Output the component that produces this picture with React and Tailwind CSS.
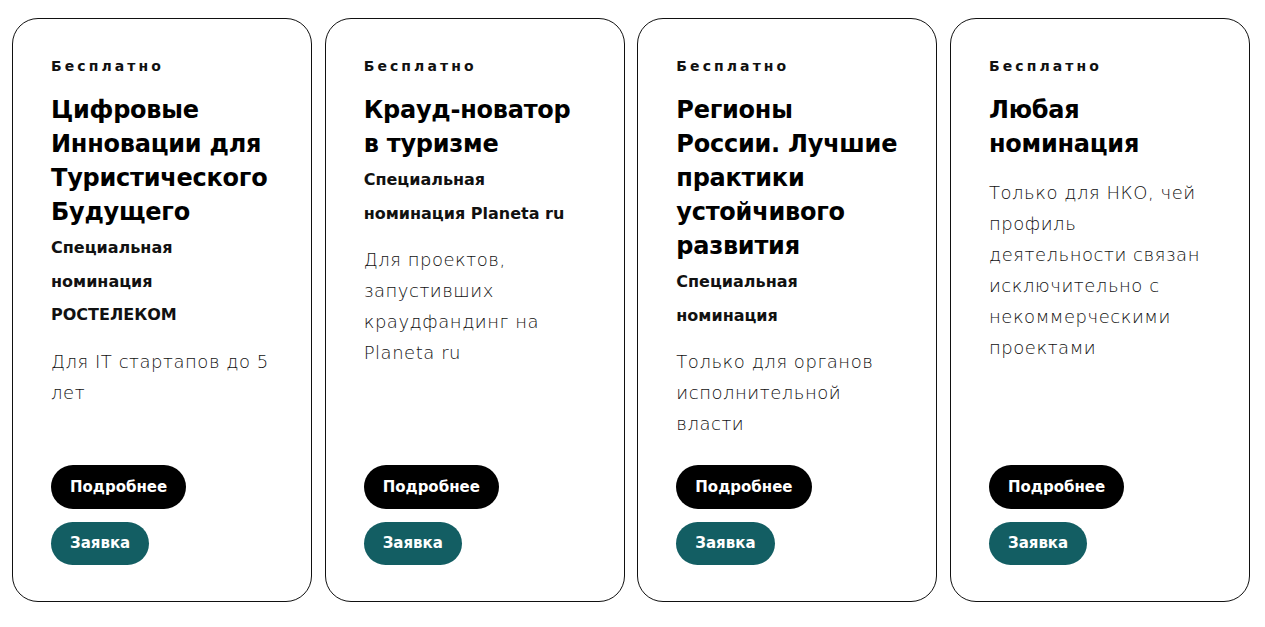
import React from 'react';

const cards = [
  {
    title: ['Цифровые', 'Инновации для', 'Туристического', 'Будущего'],
    subtitle: ['Специальная', 'номинация', 'РОСТЕЛЕКОМ'],
    text: ['Для IT стартапов до 5', 'лет'],
  },
  {
    title: ['Крауд-новатор', 'в туризме'],
    subtitle: ['Специальная', 'номинация Planeta ru'],
    text: ['Для проектов,', 'запустивших', 'краудфандинг на', 'Planeta ru'],
  },
  {
    title: ['Регионы', 'России. Лучшие', 'практики', 'устойчивого', 'развития'],
    subtitle: ['Специальная', 'номинация'],
    text: ['Только для органов', 'исполнительной', 'власти'],
  },
  {
    title: ['Любая', 'номинация'],
    subtitle: null,
    text: ['Только для НКО, чей', 'профиль', 'деятельности связан', 'исключительно с', 'некоммерческими', 'проектами'],
  },
];

const Lines = ({ lines }) =>
  lines.map((line, i) => (
    <span key={i} className="block whitespace-nowrap">
      {line}
    </span>
  ));

const Card = ({ card }) => {
  return (
    <div className="flex w-[300px] flex-col rounded-[26px] border border-[#111] bg-white px-[38px] pb-[36px] pt-[37px]">
      <div className="text-[14px] font-bold leading-5 tracking-[0.22em] text-[#111]">Бесплатно</div>

      <h3 className="mt-[17px] text-[24px] font-bold leading-[34px] tracking-[-0.01em] text-black">
        <Lines lines={card.title} />
      </h3>

      {card.subtitle && (
        <p className="mt-[2px] text-[16px] font-semibold leading-[33.5px] text-[#111]">
          <Lines lines={card.subtitle} />
        </p>
      )}

      <p
        className={
          (card.subtitle ? 'mt-[14px] ' : 'mt-[16px] ') +
          'text-[18px] font-light leading-[31px] tracking-[0.03em] text-[#111]'
        }
      >
        <Lines lines={card.text} />
      </p>

      <div className="mt-auto flex flex-col items-start gap-[13px] pt-5">
        <button className="h-[44px] rounded-full bg-black px-[19px] text-[15px] font-bold text-white">
          Подробнее
        </button>
        <button className="h-[43px] rounded-full bg-[#135e63] px-[19px] text-[15px] font-bold text-white">
          Заявка
        </button>
      </div>
    </div>
  );
};

export default function App() {
  return (
    <div className="min-h-screen bg-white font-['DejaVu_Sans',sans-serif]">
      <div className="flex h-[627px] gap-[12.67px] pb-[25px] pl-[12px] pt-[18px]">
        {cards.map((card, i) => (
          <Card key={i} card={card} />
        ))}
      </div>
    </div>
  );
}
